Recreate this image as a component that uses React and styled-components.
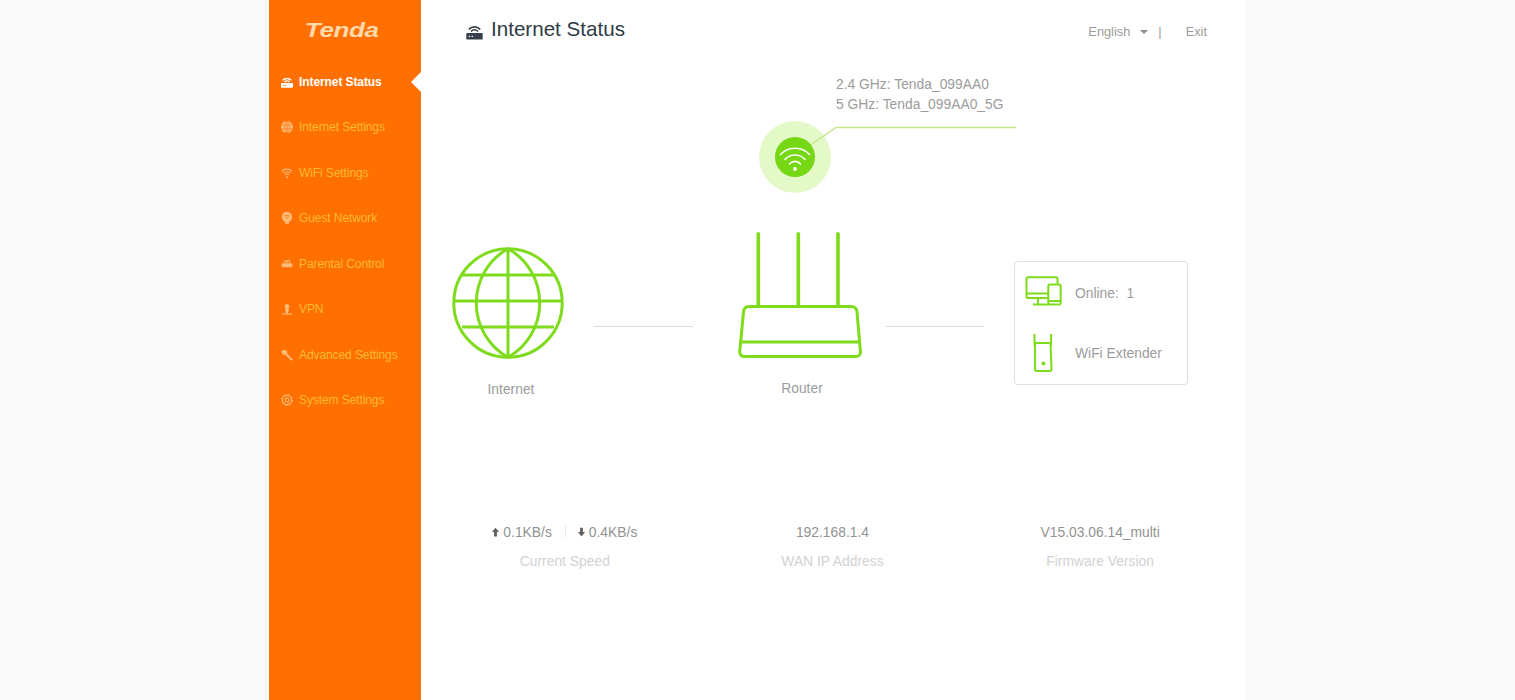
import React from 'react';
import styled, { createGlobalStyle } from 'styled-components';

const Global = createGlobalStyle`
  html, body { margin: 0; padding: 0; background: #f9f9f9; }
  body { font-family: "Liberation Sans", Arial, sans-serif; }
`;

const Shell = styled.div`
  display: flex;
  width: 977px;
  height: 700px;
  margin: 0 auto;
  background: #fff;
  overflow: hidden;
`;
const Sidebar = styled.aside`
  flex: 0 0 152px;
  background: #ff7000;
`;
const LogoBar = styled.div`
  height: 59.3px;
  display: flex;
  align-items: center;
  justify-content: center;
  padding-right: 6px;
  box-sizing: border-box;
`;
const Logo = styled.span`
  display: inline-block;
  font-size: 21px;
  font-weight: 700;
  font-style: italic;
  color: #ffd9ad;
  letter-spacing: -0.3px;
  transform: scaleX(1.24);
`;
const Nav = styled.nav`
  display: flex;
  flex-direction: column;
`;
const NavItem = styled.a`
  position: relative;
  display: flex;
  align-items: center;
  gap: 6px;
  height: 45.45px;
  padding-left: 12px;
  font-size: 12px;
  letter-spacing: -0.09px;
  font-weight: ${p => (p.$active ? 700 : 400)};
  color: ${p => (p.$active ? '#fff' : '#ffbb33')};
  ${p => p.$active && `
    &::after {
      content: '';
      position: absolute;
      right: 0;
      top: 50%;
      margin-top: -10px;
      border-style: solid;
      border-width: 10px 10px 10px 0;
      border-color: transparent #fff transparent transparent;
    }
  `}
`;
const NavGlyph = styled.svg`
  flex: 0 0 12px;
  width: 12px;
  height: 12px;
  fill: none;
  stroke: currentColor;
  color: ${p => (p.$active ? '#fff' : '#ffbc78')};
`;
const Main = styled.main`
  flex: 1;
  display: flex;
  flex-direction: column;
`;
const Header = styled.header`
  height: 74px;
  display: flex;
  justify-content: space-between;
  padding: 17px 39px 0 45px;
  box-sizing: border-box;
`;
const Title = styled.h1`
  display: flex;
  align-items: center;
  gap: 8px;
  height: 23px;
  margin: 0;
  font-size: 20.6px;
  font-weight: 400;
  color: #2f3b45;
`;
const TitleGlyph = styled.svg`
  width: 17px;
  height: 17px;
  margin-top: 5px;
`;
const HeaderTools = styled.div`
  display: flex;
  align-items: center;
  height: 28px;
  font-size: 12.8px;
  color: #9c9c9c;
`;
const Caret = styled.i`
  width: 0;
  height: 0;
  margin: 1px 0 0 10px;
  border-style: solid;
  border-width: 4px 4px 0;
  border-color: #8e8e8e transparent transparent;
`;
const Pipe = styled.span`
  margin: 0 24px 0 10px;
`;
const WifiBlock = styled.section`
  display: flex;
  flex-direction: column;
  height: 158px;
  margin-left: 338px;
`;
const Ssid = styled.div`
  margin-left: 77px;
  font-size: 13.85px;
  line-height: 20px;
  color: #9c9c9c;
`;
const WifiGraphic = styled.svg`
  width: 258px;
  height: 74px;
  margin-top: 7px;
`;
const Topology = styled.section`
  display: flex;
  align-items: flex-start;
  padding-left: 31px;
  height: 167px;
`;
const InternetNode = styled.div`
  width: 118px;
  margin-top: 15px;
`;
const RouterNode = styled.div`
  width: 124px;
  margin-left: 45px;
`;
const NodeArt = styled.svg`
  display: block;
  flex: none;
  fill: none;
  stroke: #7edc1c;
`;
const NodeLabel = styled.div`
  margin-top: 20px;
  padding-left: ${p => p.$inset || 0}px;
  font-size: 13.85px;
  line-height: 20px;
  text-align: center;
  color: #9c9c9c;
`;
const Connector = styled.div`
  width: ${p => p.$width}px;
  height: 1px;
  margin: 94px 0 0 ${p => p.$offset}px;
  background: #dcdcdc;
`;
const DeviceBox = styled.div`
  width: 174px;
  height: 124px;
  margin: 29px 0 0 30px;
  box-sizing: border-box;
  border: 1px solid #e0e0e0;
  border-radius: 4px;
  padding: 1px 0 1px 9px;
  display: flex;
  flex-direction: column;
`;
const DeviceRow = styled.div`
  flex: 1;
  display: flex;
  align-items: center;
  gap: 11px;
  font-size: 13.85px;
  color: #9c9c9c;
`;
const Stats = styled.section`
  display: grid;
  grid-template-columns: repeat(3, 1fr);
  width: 803px;
  margin: 122px 0 0 10px;
  text-align: center;
`;
const StatValue = styled.div`
  display: flex;
  align-items: center;
  justify-content: center;
  height: 21px;
  font-size: 13.85px;
  color: #929292;
`;
const StatLabel = styled.div`
  margin-top: 9px;
  font-size: 13.85px;
  line-height: 21px;
  color: #d2d2d2;
`;
const SpeedSep = styled.span`
  width: 1px;
  height: 13px;
  margin: 0 12px 0 13px;
  background: #ececec;
`;
const SpeedArrow = styled.svg`
  width: 7px;
  height: 10px;
  margin-right: 4px;
  fill: #5f5f5f;
`;

const icons = {
  status: (
    <>
      <path d="M1.6 4.4a6 6 0 0 1 8.8 0M3.4 6a3.4 3.4 0 0 1 5.2 0" strokeWidth="1.3" />
      <rect x="0" y="7" width="12" height="4.8" rx="0.7" fill="currentColor" stroke="none" />
      <path d="M2 9.4h1.2M4 9.4h1.2" stroke="#ff7000" strokeWidth="0.9" />
    </>
  ),
  globe: (
    <>
      <circle cx="6" cy="6" r="6" fill="currentColor" stroke="none" />
      <path d="M0 4h12M0 8h12M6 0v12M6 0c-3.4 3-3.4 9 0 12M6 0c3.4 3 3.4 9 0 12" stroke="#ff7000" strokeWidth="0.6" />
    </>
  ),
  wifi: (
    <>
      <path d="M0.8 4.2a7.6 7.6 0 0 1 10.4 0M2.5 6.2a5 5 0 0 1 7 0M4.2 8a2.6 2.6 0 0 1 3.6 0" strokeWidth="1.2" />
      <circle cx="6" cy="10.2" r="1" fill="currentColor" stroke="none" />
    </>
  ),
  guest: (
    <>
      <circle cx="6" cy="5" r="5.2" fill="currentColor" stroke="none" />
      <path d="M3.2 4.4a4 4 0 0 1 5.6 0M4.6 6.1a2 2 0 0 1 2.8 0" stroke="#ff7000" strokeWidth="0.8" />
      <rect x="4" y="10.4" width="4" height="1.6" fill="currentColor" stroke="none" />
    </>
  ),
  parental: (
    <>
      <path d="M3.6 5V2.8h2V4.4M6.6 4.4V2.2h2V5" strokeWidth="1" />
      <rect x="0.6" y="5.2" width="10.8" height="4" rx="0.9" fill="currentColor" stroke="none" />
    </>
  ),
  vpn: (
    <>
      <circle cx="6" cy="3.2" r="2.3" fill="currentColor" stroke="none" />
      <path d="M4 5.2h4l-1 4.8H5z" fill="currentColor" stroke="none" />
      <path d="M1 11h10" strokeWidth="1.3" />
    </>
  ),
  advanced: (
    <>
      <path d="M5 5.2 11 11" strokeWidth="2" />
      <path d="M0.4 2.6 3 .6l3 1.4.4 3.2L3.6 6 1.2 5z" fill="currentColor" stroke="none" />
    </>
  ),
  system: (
    <>
      <circle cx="6" cy="6" r="4.6" strokeWidth="1.1" />
      <circle cx="6" cy="6" r="5.5" strokeWidth="1" strokeDasharray="1.6 2.72" />
      <circle cx="6" cy="6" r="1.9" strokeWidth="1.1" />
    </>
  ),
};

const navItems = [
  ['status', 'Internet Status'],
  ['globe', 'Internet Settings'],
  ['wifi', 'WiFi Settings'],
  ['guest', 'Guest Network'],
  ['parental', 'Parental Control'],
  ['vpn', 'VPN'],
  ['advanced', 'Advanced Settings'],
  ['system', 'System Settings'],
];

const Arrow = ({ down }) => (
  <SpeedArrow viewBox="0 0 8 10">
    <path d={down ? 'M2.4 0h3.2v5H8L4 10 0 5h2.4z' : 'M2.4 10h3.2V5H8L4 0 0 5h2.4z'} />
  </SpeedArrow>
);

export default function App() {
  return (
    <>
      <Global />
      <Shell>
        <Sidebar>
          <LogoBar>
            <Logo>Tenda</Logo>
          </LogoBar>
          <Nav>
            {navItems.map(([key, label], i) => (
              <NavItem key={key} $active={i === 0}>
                <NavGlyph viewBox="0 0 12 12" $active={i === 0}>{icons[key]}</NavGlyph>
                {label}
              </NavItem>
            ))}
          </Nav>
        </Sidebar>
        <Main>
          <Header>
            <Title>
              <TitleGlyph viewBox="0 0 17 17" fill="none">
                <path d="M2.8 6.4a7.8 7.8 0 0 1 11.4 0M5 8.4a4.6 4.6 0 0 1 7 0" stroke="#35404a" strokeWidth="1.6" />
                <rect x="0.3" y="10" width="16.4" height="6.6" rx="0.9" fill="#35404a" />
                <path d="M2.8 13.3h1.4M5.6 13.3h1.4" stroke="#fff" strokeWidth="1.3" />
              </TitleGlyph>
              Internet Status
            </Title>
            <HeaderTools>
              English
              <Caret />
              <Pipe>|</Pipe>
              Exit
            </HeaderTools>
          </Header>

          <WifiBlock>
            <Ssid>2.4 GHz: Tenda_099AA0</Ssid>
            <Ssid>5 GHz: Tenda_099AA0_5G</Ssid>
            <WifiGraphic viewBox="0 0 258 74" fill="none">
              <circle cx="36" cy="36" r="36" fill="#e3f9c8" />
              <path d="M50 25 77 6.5H257" stroke="#c5e68a" strokeWidth="1.3" />
              <circle cx="36" cy="36" r="20" fill="#76d714" />
              <path d="M21.5 33.5a20 20 0 0 1 29 0M26 38.5a13.5 13.5 0 0 1 20 0M30.5 43a7 7 0 0 1 11 0" stroke="#fff" strokeWidth="1.6" strokeLinecap="round" />
              <circle cx="36" cy="48" r="1.9" fill="#fff" />
            </WifiGraphic>
          </WifiBlock>

          <Topology>
            <InternetNode>
              <NodeArt width="112" height="112" viewBox="0 0 112 112" strokeWidth="3">
                <circle cx="56" cy="56" r="54.2" />
                <path d="M56 1.6V110.4M56 1.6A62.5 62.5 0 0 0 56 110.4M56 1.6A62.5 62.5 0 0 1 56 110.4" />
                <path d="M10 28h92M1.6 54H110.4M10 80h92" />
              </NodeArt>
              <NodeLabel>Internet</NodeLabel>
            </InternetNode>
            <Connector $width={99} $offset={24} />
            <RouterNode>
              <NodeArt width="124" height="126" viewBox="0 0 124 126" strokeWidth="3" strokeLinecap="round">
                <path d="M20.3 1.8V74M60.3 1.8V74M100 1.8V74" strokeWidth="3.6" />
                <path d="M11 74.5H113Q118.5 74.5 119 80L122.4 119Q122.9 124.5 117.5 124.5H7Q1.2 124.5 1.8 119L5.5 80Q6 74.5 11 74.5Z" />
                <path d="M3 110H121" />
              </NodeArt>
              <NodeLabel $inset={4}>Router</NodeLabel>
            </RouterNode>
            <Connector $width={98} $offset={24} />
            <DeviceBox>
              <DeviceRow>
                <NodeArt width="40" height="34" viewBox="0 0 40 34" strokeWidth="2">
                  <path d="M24 22H4a1.5 1.5 0 0 1-1.5-1.5V2.5A1.5 1.5 0 0 1 4 1.2h28a1.5 1.5 0 0 1 1.5 1.5V8" />
                  <path d="M2.5 17.5H24M14 22v6M9 28.5h15" />
                  <rect x="24.3" y="8.5" width="12.4" height="20" rx="1.8" />
                  <path d="M24.3 25h12.4" />
                </NodeArt>
                Online:&nbsp; 1
              </DeviceRow>
              <DeviceRow>
                <NodeArt width="40" height="42" viewBox="0 0 40 42" strokeWidth="2">
                  <path d="M10.5 2v12M27 2v12" />
                  <path d="M11 11h15.5l1 26a2 2 0 0 1-2 2H13a2 2 0 0 1-2-2z" />
                  <circle cx="19.5" cy="31.5" r="2" fill="#7edc1c" stroke="none" />
                </NodeArt>
                WiFi Extender
              </DeviceRow>
            </DeviceBox>
          </Topology>

          <Stats>
            <div>
              <StatValue>
                <Arrow />0.1KB/s<SpeedSep /><Arrow down />0.4KB/s
              </StatValue>
              <StatLabel>Current Speed</StatLabel>
            </div>
            <div>
              <StatValue>192.168.1.4</StatValue>
              <StatLabel>WAN IP Address</StatLabel>
            </div>
            <div>
              <StatValue>V15.03.06.14_multi</StatValue>
              <StatLabel>Firmware Version</StatLabel>
            </div>
          </Stats>
        </Main>
      </Shell>
    </>
  );
}
